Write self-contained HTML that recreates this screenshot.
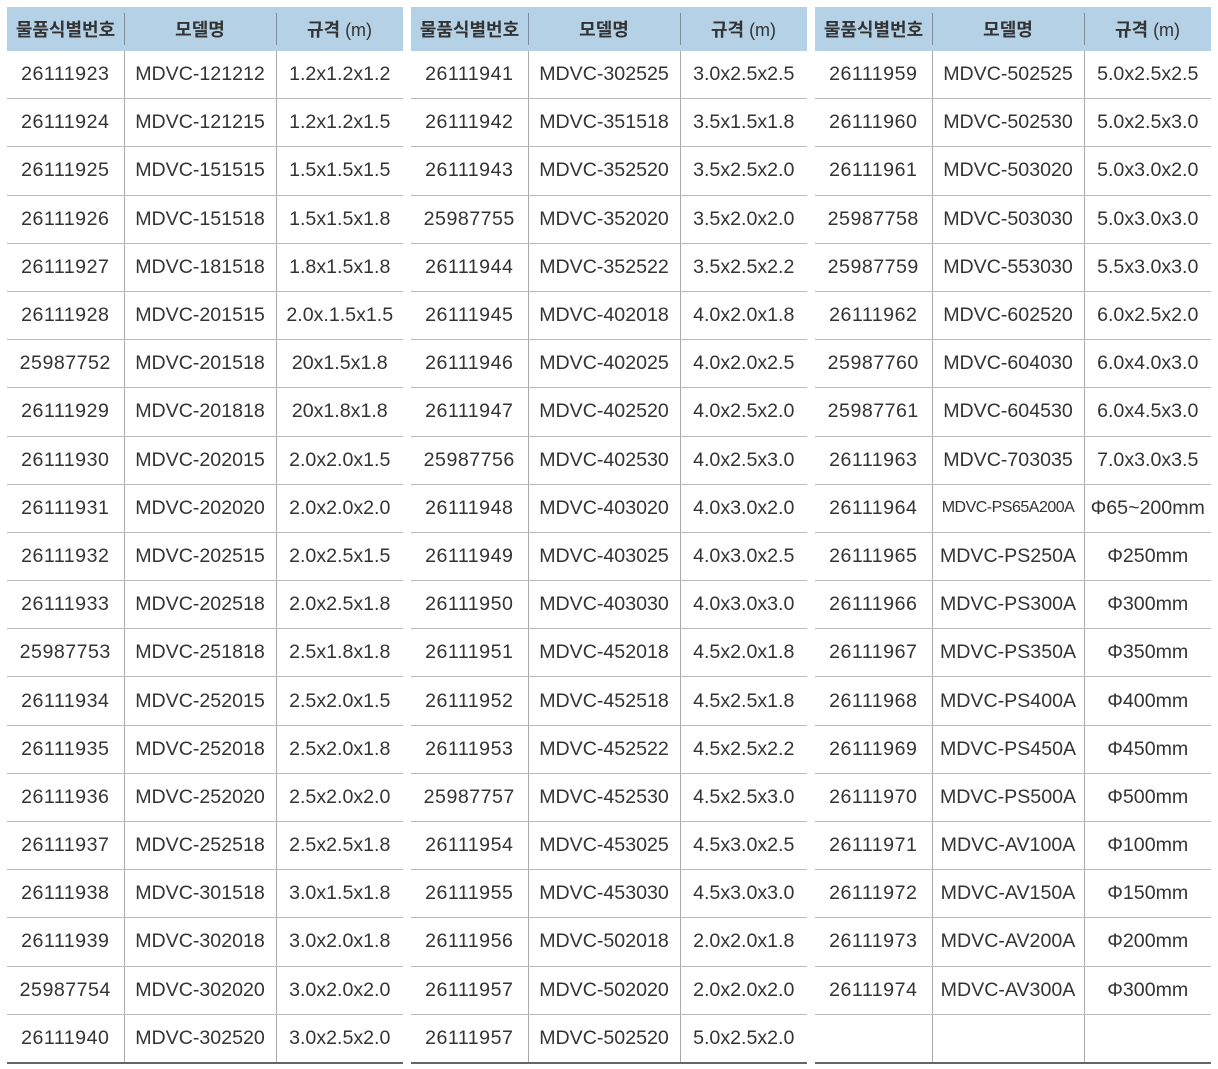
<!DOCTYPE html>
<html><head><meta charset="utf-8"><style>
body{margin:0;background:#fff;width:1218px;height:1069px;overflow:hidden;font-family:"Liberation Sans","Noto Sans CJK KR",sans-serif;}
table{position:absolute;top:7px;border-collapse:collapse;table-layout:fixed;width:396px;}
th{background:#b4d1e6;height:44px;font-size:18px;font-weight:bold;color:#333;padding:0;position:relative;}
th span{font-weight:normal}
th+th:before{content:"";position:absolute;left:0;top:6px;bottom:6px;border-left:1px solid #7d8d99;}
td{height:47.2px;border-bottom:1px solid #bbb;font-size:19.6px;color:#333;text-align:center;padding:0;white-space:nowrap;}
td:first-child{letter-spacing:0.5px}
td+td{border-left:1px solid #aaa;}
tr:last-child td{border-bottom:2px solid #666;}
col.a{width:117px}col.b{width:152px}col.c{width:127px}
.s{font-size:16px;letter-spacing:-0.5px}
</style></head><body>
<table style="left:7px"><colgroup><col class=a><col class=b><col class=c></colgroup>
<tr><th>물품식별번호</th><th>모델명</th><th>규격 <span>(m)</span></th></tr>
<tr><td>26111923</td><td>MDVC-121212</td><td>1.2x1.2x1.2</td></tr>
<tr><td>26111924</td><td>MDVC-121215</td><td>1.2x1.2x1.5</td></tr>
<tr><td>26111925</td><td>MDVC-151515</td><td>1.5x1.5x1.5</td></tr>
<tr><td>26111926</td><td>MDVC-151518</td><td>1.5x1.5x1.8</td></tr>
<tr><td>26111927</td><td>MDVC-181518</td><td>1.8x1.5x1.8</td></tr>
<tr><td>26111928</td><td>MDVC-201515</td><td>2.0x.1.5x1.5</td></tr>
<tr><td>25987752</td><td>MDVC-201518</td><td>20x1.5x1.8</td></tr>
<tr><td>26111929</td><td>MDVC-201818</td><td>20x1.8x1.8</td></tr>
<tr><td>26111930</td><td>MDVC-202015</td><td>2.0x2.0x1.5</td></tr>
<tr><td>26111931</td><td>MDVC-202020</td><td>2.0x2.0x2.0</td></tr>
<tr><td>26111932</td><td>MDVC-202515</td><td>2.0x2.5x1.5</td></tr>
<tr><td>26111933</td><td>MDVC-202518</td><td>2.0x2.5x1.8</td></tr>
<tr><td>25987753</td><td>MDVC-251818</td><td>2.5x1.8x1.8</td></tr>
<tr><td>26111934</td><td>MDVC-252015</td><td>2.5x2.0x1.5</td></tr>
<tr><td>26111935</td><td>MDVC-252018</td><td>2.5x2.0x1.8</td></tr>
<tr><td>26111936</td><td>MDVC-252020</td><td>2.5x2.0x2.0</td></tr>
<tr><td>26111937</td><td>MDVC-252518</td><td>2.5x2.5x1.8</td></tr>
<tr><td>26111938</td><td>MDVC-301518</td><td>3.0x1.5x1.8</td></tr>
<tr><td>26111939</td><td>MDVC-302018</td><td>3.0x2.0x1.8</td></tr>
<tr><td>25987754</td><td>MDVC-302020</td><td>3.0x2.0x2.0</td></tr>
<tr><td>26111940</td><td>MDVC-302520</td><td>3.0x2.5x2.0</td></tr>
</table>
<table style="left:411px"><colgroup><col class=a><col class=b><col class=c></colgroup>
<tr><th>물품식별번호</th><th>모델명</th><th>규격 <span>(m)</span></th></tr>
<tr><td>26111941</td><td>MDVC-302525</td><td>3.0x2.5x2.5</td></tr>
<tr><td>26111942</td><td>MDVC-351518</td><td>3.5x1.5x1.8</td></tr>
<tr><td>26111943</td><td>MDVC-352520</td><td>3.5x2.5x2.0</td></tr>
<tr><td>25987755</td><td>MDVC-352020</td><td>3.5x2.0x2.0</td></tr>
<tr><td>26111944</td><td>MDVC-352522</td><td>3.5x2.5x2.2</td></tr>
<tr><td>26111945</td><td>MDVC-402018</td><td>4.0x2.0x1.8</td></tr>
<tr><td>26111946</td><td>MDVC-402025</td><td>4.0x2.0x2.5</td></tr>
<tr><td>26111947</td><td>MDVC-402520</td><td>4.0x2.5x2.0</td></tr>
<tr><td>25987756</td><td>MDVC-402530</td><td>4.0x2.5x3.0</td></tr>
<tr><td>26111948</td><td>MDVC-403020</td><td>4.0x3.0x2.0</td></tr>
<tr><td>26111949</td><td>MDVC-403025</td><td>4.0x3.0x2.5</td></tr>
<tr><td>26111950</td><td>MDVC-403030</td><td>4.0x3.0x3.0</td></tr>
<tr><td>26111951</td><td>MDVC-452018</td><td>4.5x2.0x1.8</td></tr>
<tr><td>26111952</td><td>MDVC-452518</td><td>4.5x2.5x1.8</td></tr>
<tr><td>26111953</td><td>MDVC-452522</td><td>4.5x2.5x2.2</td></tr>
<tr><td>25987757</td><td>MDVC-452530</td><td>4.5x2.5x3.0</td></tr>
<tr><td>26111954</td><td>MDVC-453025</td><td>4.5x3.0x2.5</td></tr>
<tr><td>26111955</td><td>MDVC-453030</td><td>4.5x3.0x3.0</td></tr>
<tr><td>26111956</td><td>MDVC-502018</td><td>2.0x2.0x1.8</td></tr>
<tr><td>26111957</td><td>MDVC-502020</td><td>2.0x2.0x2.0</td></tr>
<tr><td>26111957</td><td>MDVC-502520</td><td>5.0x2.5x2.0</td></tr>
</table>
<table style="left:815px"><colgroup><col class=a><col class=b><col class=c></colgroup>
<tr><th>물품식별번호</th><th>모델명</th><th>규격 <span>(m)</span></th></tr>
<tr><td>26111959</td><td>MDVC-502525</td><td>5.0x2.5x2.5</td></tr>
<tr><td>26111960</td><td>MDVC-502530</td><td>5.0x2.5x3.0</td></tr>
<tr><td>26111961</td><td>MDVC-503020</td><td>5.0x3.0x2.0</td></tr>
<tr><td>25987758</td><td>MDVC-503030</td><td>5.0x3.0x3.0</td></tr>
<tr><td>25987759</td><td>MDVC-553030</td><td>5.5x3.0x3.0</td></tr>
<tr><td>26111962</td><td>MDVC-602520</td><td>6.0x2.5x2.0</td></tr>
<tr><td>25987760</td><td>MDVC-604030</td><td>6.0x4.0x3.0</td></tr>
<tr><td>25987761</td><td>MDVC-604530</td><td>6.0x4.5x3.0</td></tr>
<tr><td>26111963</td><td>MDVC-703035</td><td>7.0x3.0x3.5</td></tr>
<tr><td>26111964</td><td class=s>MDVC-PS65A200A</td><td>Φ65~200mm</td></tr>
<tr><td>26111965</td><td>MDVC-PS250A</td><td>Φ250mm</td></tr>
<tr><td>26111966</td><td>MDVC-PS300A</td><td>Φ300mm</td></tr>
<tr><td>26111967</td><td>MDVC-PS350A</td><td>Φ350mm</td></tr>
<tr><td>26111968</td><td>MDVC-PS400A</td><td>Φ400mm</td></tr>
<tr><td>26111969</td><td>MDVC-PS450A</td><td>Φ450mm</td></tr>
<tr><td>26111970</td><td>MDVC-PS500A</td><td>Φ500mm</td></tr>
<tr><td>26111971</td><td>MDVC-AV100A</td><td>Φ100mm</td></tr>
<tr><td>26111972</td><td>MDVC-AV150A</td><td>Φ150mm</td></tr>
<tr><td>26111973</td><td>MDVC-AV200A</td><td>Φ200mm</td></tr>
<tr><td>26111974</td><td>MDVC-AV300A</td><td>Φ300mm</td></tr>
<tr><td></td><td></td><td></td></tr>
</table>
</body></html>
